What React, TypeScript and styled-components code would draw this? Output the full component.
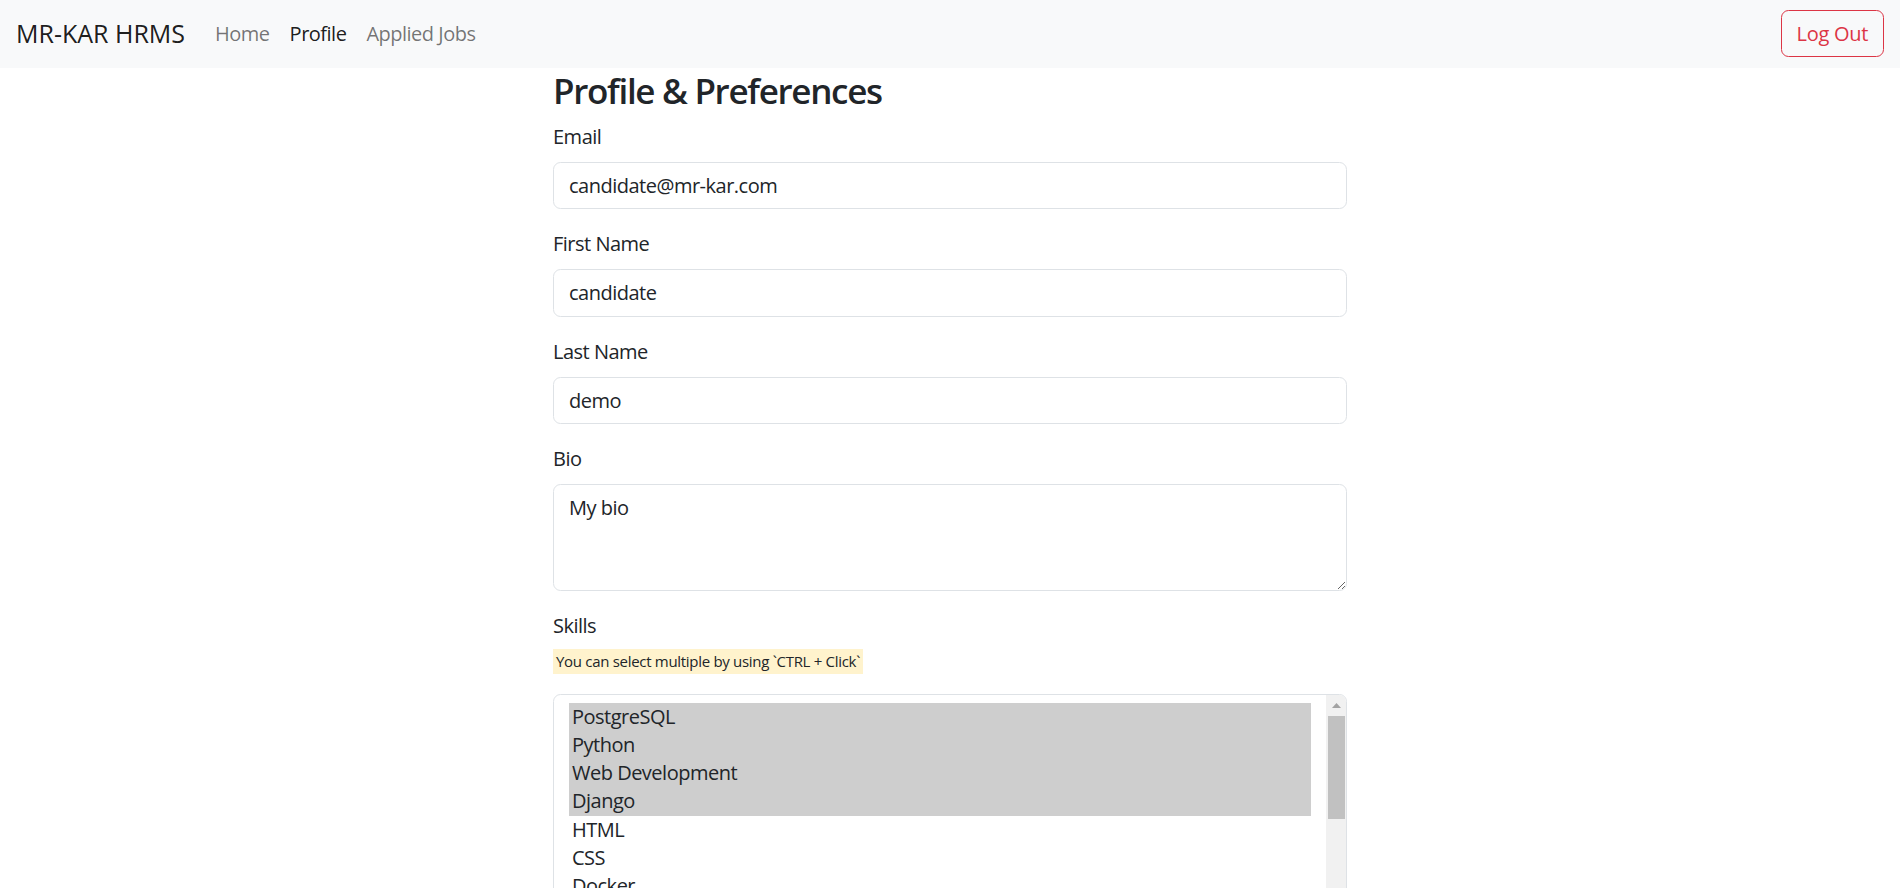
import React from "react";
import styled, { createGlobalStyle } from "styled-components";

const Global = createGlobalStyle`
  html, body { margin: 0; padding: 0; overflow: hidden; }
  body {
    font-family: "Segoe UI", "Open Sans", "Liberation Sans", sans-serif;
    font-size: 20px;
    line-height: 1.5;
    letter-spacing: -0.5px;
    color: #212529;
    background: #fff;
  }
  * { box-sizing: border-box; }
`;

const Navbar = styled.nav`
  display: flex;
  align-items: center;
  justify-content: space-between;
  background: #f8f9fa;
  padding: 10px 16px;
  height: 67.5px;
`;

const NavLeft = styled.div`
  display: flex;
  align-items: center;
`;

const Brand = styled.a`
  font-size: 25px;
  line-height: 37.5px;
  padding: 5px 0;
  margin-right: 20px;
  letter-spacing: 0;
  color: rgba(0, 0, 0, 0.9);
  text-decoration: none;
`;

const NavLink = styled.a<{ $active?: boolean }>`
  padding: 10px;
  font-size: 20px;
  line-height: 30px;
  color: ${(p) => (p.$active ? "rgba(0,0,0,0.9)" : "rgba(0,0,0,0.55)")};
  text-decoration: none;
`;

const LogoutButton = styled.button`
  font-family: inherit;
  font-size: 20px;
  line-height: 30px;
  letter-spacing: -0.3px;
  padding: 7.5px 15px;
  color: #dc3545;
  background: transparent;
  border: 1px solid #dc3545;
  border-radius: 7.5px;
  cursor: pointer;
`;

const Container = styled.main`
  width: 794px;
  margin: 0 auto;
`;

const Heading = styled.h3`
  font-size: 35px;
  font-weight: 600;
  line-height: 42px;
  letter-spacing: -1.3px;
  margin: 2px 0 10px;
`;

const Group = styled.div`
  margin-bottom: 20px;
`;

const Label = styled.label<{ $tight?: boolean }>`
  display: block;
  margin-bottom: ${(p) => (p.$tight ? "8px" : "10px")};
`;

const Input = styled.input`
  display: block;
  width: 100%;
  height: 47.5px;
  padding: 7.5px 15px;
  font-family: inherit;
  font-size: 20px;
  line-height: 30px;
  letter-spacing: -0.5px;
  color: #212529;
  border: 1px solid #dee2e6;
  border-radius: 7.5px;
  outline: none;
`;

const TextArea = styled.textarea`
  display: block;
  width: 100%;
  height: 107px;
  padding: 7.5px 15px;
  font-family: inherit;
  font-size: 20px;
  line-height: 30px;
  letter-spacing: -0.5px;
  color: #212529;
  border: 1px solid #dee2e6;
  border-radius: 7.5px;
  resize: vertical;
  outline: none;
`;

const Hint = styled.div`
  display: block;
  width: fit-content;
  height: 25px;
  line-height: 25px;
  padding: 0 3px;
  font-size: 15px;
  letter-spacing: -0.3px;
  background: #fff3cd;
  color: #212529;
  margin-bottom: 20px;
`;

const SelectBox = styled.div`
  display: flex;
  height: 300px;
  border: 1px solid #dee2e6;
  border-radius: 7.5px;
  overflow: hidden;
`;

const OptionList = styled.div`
  flex: 1;
  padding: 7.5px 15px;
`;

const Option = styled.div<{ $selected?: boolean }>`
  height: 28.25px;
  line-height: 28px;
  padding: 0 3px;
  font-size: 20px;
  background: ${(p) => (p.$selected ? "#cecece" : "transparent")};
`;

const Track = styled.div`
  width: 20px;
  background: #f1f1f1;
  display: flex;
  flex-direction: column;
  align-items: center;
`;

const ArrowBtn = styled.div`
  height: 21px;
  width: 100%;
  display: flex;
  align-items: center;
  justify-content: center;
`;

const Thumb = styled.div`
  width: 17px;
  height: 103px;
  background: #c1c1c1;
`;

const skills = [
  { name: "PostgreSQL", selected: true },
  { name: "Python", selected: true },
  { name: "Web Development", selected: true },
  { name: "Django", selected: true },
  { name: "HTML", selected: false },
  { name: "CSS", selected: false },
  { name: "Docker", selected: false },
  { name: "JavaScript", selected: false },
  { name: "React", selected: false },
  { name: "Git", selected: false },
];

export default function App() {
  return (
    <>
      <Global />
      <Navbar>
        <NavLeft>
          <Brand href="#">MR-KAR HRMS</Brand>
          <NavLink href="#">Home</NavLink>
          <NavLink href="#" $active>
            Profile
          </NavLink>
          <NavLink href="#">Applied Jobs</NavLink>
        </NavLeft>
        <LogoutButton>Log Out</LogoutButton>
      </Navbar>
      <Container>
        <Heading>Profile &amp; Preferences</Heading>
        <Group>
          <Label>Email</Label>
          <Input defaultValue="candidate@mr-kar.com" />
        </Group>
        <Group>
          <Label>First Name</Label>
          <Input defaultValue="candidate" />
        </Group>
        <Group>
          <Label>Last Name</Label>
          <Input defaultValue="demo" />
        </Group>
        <Group>
          <Label>Bio</Label>
          <TextArea defaultValue="My bio" />
        </Group>
        <Group>
          <Label $tight>Skills</Label>
          <Hint>You can select multiple by using `CTRL + Click`</Hint>
          <SelectBox>
            <OptionList>
              {skills.map((s) => (
                <Option key={s.name} $selected={s.selected}>
                  {s.name}
                </Option>
              ))}
            </OptionList>
            <Track>
              <ArrowBtn>
                <svg width="9" height="5" viewBox="0 0 9 5">
                  <polygon points="4.5,0 9,5 0,5" fill="#a3a3a3" />
                </svg>
              </ArrowBtn>
              <Thumb />
            </Track>
          </SelectBox>
        </Group>
      </Container>
    </>
  );
}
